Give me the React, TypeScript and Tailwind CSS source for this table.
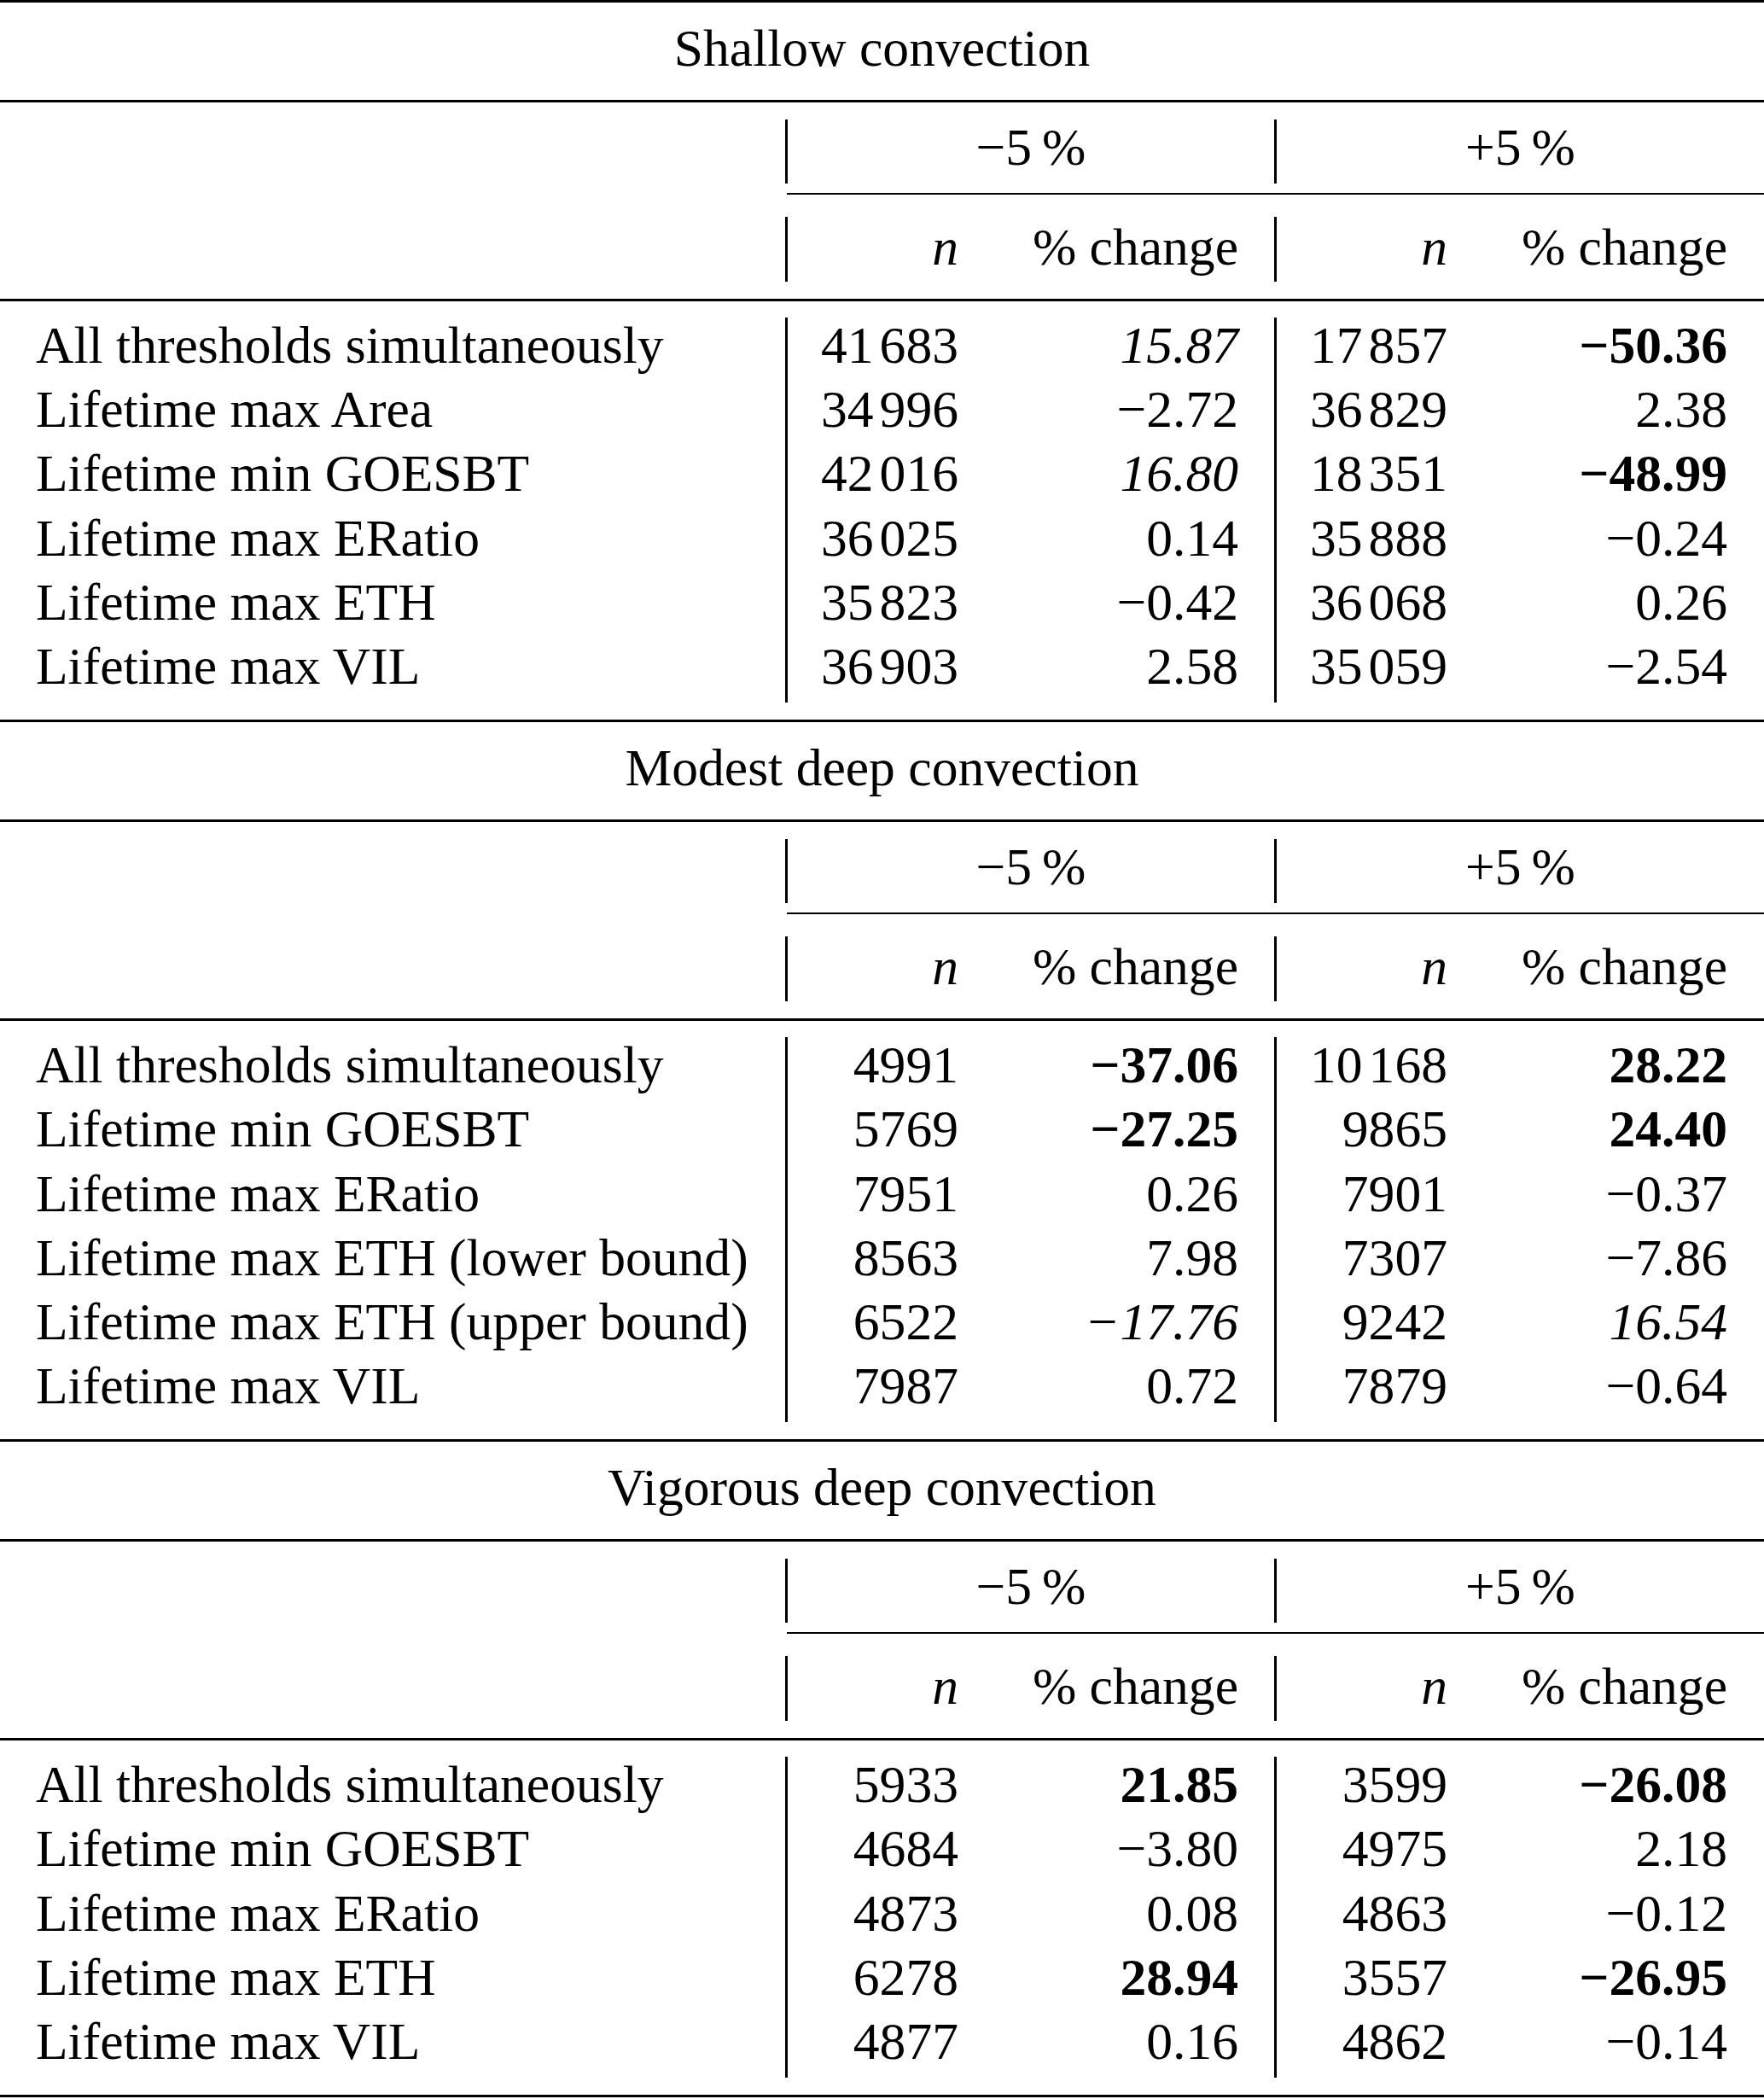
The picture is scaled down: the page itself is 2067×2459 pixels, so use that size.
import React from "react";

type Cell = { v: string; s?: "b" | "i" };
type Row = { label: string; n1: string; c1: Cell; n2: string; c2: Cell };
type Section = { title: string; rows: Row[] };

const sections: Section[] = [
  {
    title: "Shallow convection",
    rows: [
      { label: "All thresholds simultaneously", n1: "41 683", c1: { v: "15.87", s: "i" }, n2: "17 857", c2: { v: "−50.36", s: "b" } },
      { label: "Lifetime max Area", n1: "34 996", c1: { v: "−2.72" }, n2: "36 829", c2: { v: "2.38" } },
      { label: "Lifetime min GOESBT", n1: "42 016", c1: { v: "16.80", s: "i" }, n2: "18 351", c2: { v: "−48.99", s: "b" } },
      { label: "Lifetime max ERatio", n1: "36 025", c1: { v: "0.14" }, n2: "35 888", c2: { v: "−0.24" } },
      { label: "Lifetime max ETH", n1: "35 823", c1: { v: "−0.42" }, n2: "36 068", c2: { v: "0.26" } },
      { label: "Lifetime max VIL", n1: "36 903", c1: { v: "2.58" }, n2: "35 059", c2: { v: "−2.54" } },
    ],
  },
  {
    title: "Modest deep convection",
    rows: [
      { label: "All thresholds simultaneously", n1: "4991", c1: { v: "−37.06", s: "b" }, n2: "10 168", c2: { v: "28.22", s: "b" } },
      { label: "Lifetime min GOESBT", n1: "5769", c1: { v: "−27.25", s: "b" }, n2: "9865", c2: { v: "24.40", s: "b" } },
      { label: "Lifetime max ERatio", n1: "7951", c1: { v: "0.26" }, n2: "7901", c2: { v: "−0.37" } },
      { label: "Lifetime max ETH (lower bound)", n1: "8563", c1: { v: "7.98" }, n2: "7307", c2: { v: "−7.86" } },
      { label: "Lifetime max ETH (upper bound)", n1: "6522", c1: { v: "−17.76", s: "i" }, n2: "9242", c2: { v: "16.54", s: "i" } },
      { label: "Lifetime max VIL", n1: "7987", c1: { v: "0.72" }, n2: "7879", c2: { v: "−0.64" } },
    ],
  },
  {
    title: "Vigorous deep convection",
    rows: [
      { label: "All thresholds simultaneously", n1: "5933", c1: { v: "21.85", s: "b" }, n2: "3599", c2: { v: "−26.08", s: "b" } },
      { label: "Lifetime min GOESBT", n1: "4684", c1: { v: "−3.80" }, n2: "4975", c2: { v: "2.18" } },
      { label: "Lifetime max ERatio", n1: "4873", c1: { v: "0.08" }, n2: "4863", c2: { v: "−0.12" } },
      { label: "Lifetime max ETH", n1: "6278", c1: { v: "28.94", s: "b" }, n2: "3557", c2: { v: "−26.95", s: "b" } },
      { label: "Lifetime max VIL", n1: "4877", c1: { v: "0.16" }, n2: "4862", c2: { v: "−0.14" } },
    ],
  },
];

// digit groups are separated by a narrow gap, like siunitx does
const Num = ({ v }: { v: string }) => {
  const parts = v.split(" ");
  return (
    <>
      {parts.map((p, i) => (
        <React.Fragment key={i}>
          {i > 0 && <span className="inline-block w-[7px]" />}
          {p}
        </React.Fragment>
      ))}
    </>
  );
};

const Change = ({ c }: { c: Cell }) => {
  if (c.s === "b") return <span className="font-bold">{c.v}</span>;
  if (c.s === "i") return <span className="italic">{c.v}</span>;
  return <span>{c.v}</span>;
};

const Rule = () => <div className="h-[3px] bg-black" />;
const Bar = () => <div className="w-[3px] shrink-0 bg-black" />;

const TableSection = ({ s }: { s: Section }) => {
  const cell = "h-[75.2px] pt-px";
  return (
    <div>
      <Rule />
      <div className="h-[114px] pt-[22px] text-center">{s.title}</div>
      <Rule />

      <div className="mt-[20px] flex h-[75px]">
        <div className="w-[920px] shrink-0" />
        <Bar />
        <div className="w-[570px] shrink-0 pt-px text-center">
          −5<span className="inline-block w-[12px]" />%
        </div>
        <Bar />
        <div className="flex-1 pt-px text-center">
          +5<span className="inline-block w-[12px]" />%
        </div>
      </div>

      <div className="mt-[11px] ml-[922px] h-[2px] bg-black" />

      <div className="mt-[26px] flex h-[76px]">
        <div className="w-[920px] shrink-0" />
        <Bar />
        <div className="w-[243px] shrink-0 pt-[4px] pr-[43px] text-right italic">n</div>
        <div className="w-[327px] shrink-0 pt-[4px] pr-[42px] text-right">% change</div>
        <Bar />
        <div className="w-[243px] shrink-0 pt-[4px] pr-[43px] text-right italic">n</div>
        <div className="flex-1 pt-[4px] pr-[43px] text-right">% change</div>
      </div>

      <div className="mt-[20px]" />
      <Rule />

      <div className="mt-[19px] mb-[20px] flex">
        <div className="w-[920px] shrink-0 pl-[42px]">
          {s.rows.map((r) => (
            <div key={r.label} className={cell}>
              {r.label}
            </div>
          ))}
        </div>
        <Bar />
        <div className="w-[243px] shrink-0 pr-[43px] text-right">
          {s.rows.map((r) => (
            <div key={r.label} className={cell}>
              <Num v={r.n1} />
            </div>
          ))}
        </div>
        <div className="w-[327px] shrink-0 pr-[42px] text-right">
          {s.rows.map((r) => (
            <div key={r.label} className={cell}>
              <Change c={r.c1} />
            </div>
          ))}
        </div>
        <Bar />
        <div className="w-[243px] shrink-0 pr-[43px] text-right">
          {s.rows.map((r) => (
            <div key={r.label} className={cell}>
              <Num v={r.n2} />
            </div>
          ))}
        </div>
        <div className="flex-1 pr-[43px] text-right">
          {s.rows.map((r) => (
            <div key={r.label} className={cell}>
              <Change c={r.c2} />
            </div>
          ))}
        </div>
      </div>
    </div>
  );
};

export default function App() {
  return (
    <div className="min-h-[2459px] w-[2067px] bg-white font-['Liberation_Serif',serif] text-[61.6px] leading-[62px] text-black">
      {sections.map((s) => (
        <TableSection key={s.title} s={s} />
      ))}
      <Rule />
    </div>
  );
}
